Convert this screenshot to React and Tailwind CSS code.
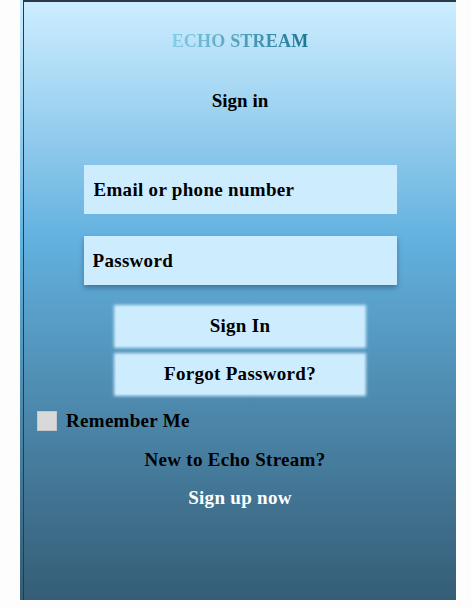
import { useState } from "react";

export default function App() {
  const [remember, setRemember] = useState(false);

  return (
    <div className="min-h-screen bg-[#fdfdfd] font-['Liberation_Serif',serif]">
      {/* Login panel */}
      <div className="ml-[20px] w-[436px] h-[600px] pl-[3px] bg-gradient-to-b from-[#cdeeff] via-[#62b1df] via-40% to-[#355d76]">
        <div className="h-full border-t-2 border-l border-[#2b3a44] flex flex-col items-center">
          <h1 className="mt-[27px] text-[18px] font-bold leading-6 tracking-[0.2px] bg-gradient-to-r from-[#86cde4] to-[#1b7594] bg-clip-text text-transparent">
            ECHO STREAM
          </h1>

          <h2 className="mt-[36px] text-[19px] font-bold leading-6 text-black">Sign in</h2>

          <div className="mt-[52px] w-[313px] flex flex-col gap-[22px]">
            <input
              placeholder="Email or phone number"
              className="h-[49px] px-[10px] bg-[#cdecfe] text-[19px] tracking-[0.3px] font-bold text-black placeholder:text-black outline-none"
            />
            <input
              type="password"
              placeholder="Password"
              className="h-[49px] px-[9px] bg-[#cdecfe] text-[19px] tracking-[0.3px] font-bold text-black placeholder:text-black outline-none shadow-[0_3px_5px_rgba(30,60,90,0.45)]"
            />
          </div>

          <div className="mt-[22px] w-[248px] flex flex-col gap-[9px]">
            <button className="h-[39px] bg-[#cdecfe] text-[19px] tracking-[0.3px] font-bold text-black shadow-[0_0_3px_2px_#cdecfe]">
              Sign In
            </button>
            <button className="h-[39px] bg-[#cdecfe] text-[19px] tracking-[0.3px] font-bold text-black shadow-[0_0_3px_2px_#cdecfe]">
              Forgot Password?
            </button>
          </div>

          <label className="self-start mt-[15px] ml-[13px] flex items-center gap-[9px] cursor-pointer">
            <input
              type="checkbox"
              checked={remember}
              onChange={(e) => setRemember(e.target.checked)}
              className="appearance-none w-[20px] h-[20px] bg-[#d9d9d9] border border-[#c4c8cc]"
            />
            <span className="text-[19px] tracking-[0.3px] font-bold text-black leading-6">Remember Me</span>
          </label>

          <p className="mt-[15px] mr-[10px] text-[19px] tracking-[0.3px] font-bold text-black leading-6">New to Echo Stream?</p>
          <a href="#" className="mt-[14px] text-[19px] tracking-[0.3px] font-bold text-white leading-6">
            Sign up now
          </a>
        </div>
      </div>
    </div>
  );
}
